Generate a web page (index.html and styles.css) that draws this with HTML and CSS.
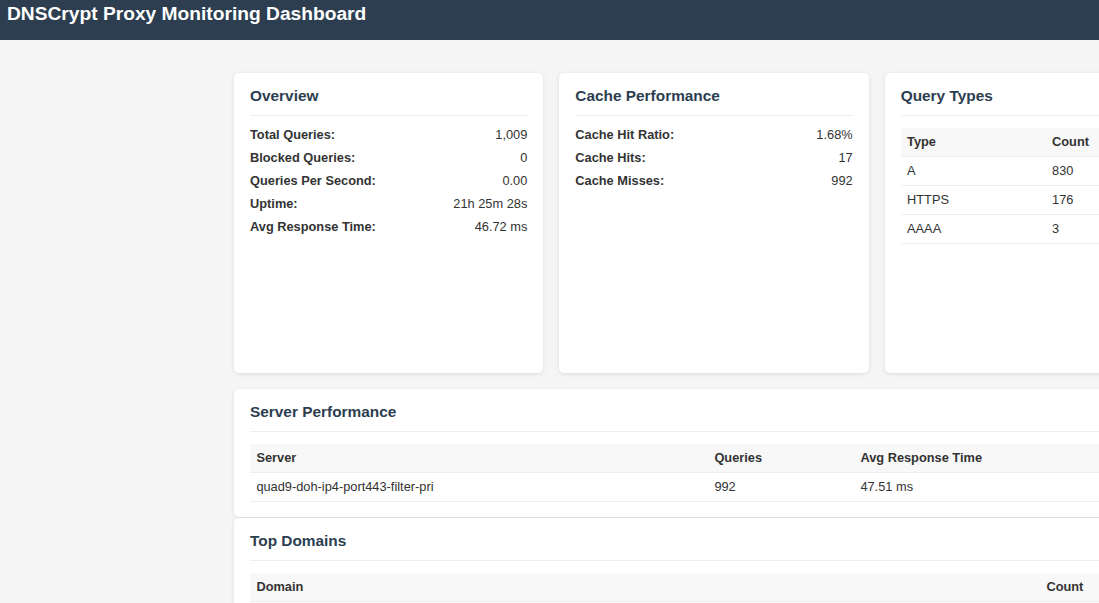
FILE: index.html
```html
<!DOCTYPE html>
<html lang="en">
<head>
<meta charset="utf-8">
<title>DNSCrypt Proxy Monitoring Dashboard</title>
<link rel="stylesheet" href="styles.css">
</head>
<body>
<header class="topbar">
  <h1 class="topbar-title">DNSCrypt Proxy Monitoring Dashboard</h1>
</header>
<main class="container">
  <section class="grid">
    <div class="card card-fixed">
      <h2 class="card-title">Overview</h2>
      <div class="stats">
        <div class="stat"><span class="stat-label">Total Queries:</span><span class="stat-value">1,009</span></div>
        <div class="stat"><span class="stat-label">Blocked Queries:</span><span class="stat-value">0</span></div>
        <div class="stat"><span class="stat-label">Queries Per Second:</span><span class="stat-value">0.00</span></div>
        <div class="stat"><span class="stat-label">Uptime:</span><span class="stat-value">21h 25m 28s</span></div>
        <div class="stat"><span class="stat-label">Avg Response Time:</span><span class="stat-value">46.72 ms</span></div>
      </div>
    </div>
    <div class="card card-fixed">
      <h2 class="card-title">Cache Performance</h2>
      <div class="stats">
        <div class="stat"><span class="stat-label">Cache Hit Ratio:</span><span class="stat-value">1.68%</span></div>
        <div class="stat"><span class="stat-label">Cache Hits:</span><span class="stat-value">17</span></div>
        <div class="stat"><span class="stat-label">Cache Misses:</span><span class="stat-value">992</span></div>
      </div>
    </div>
    <div class="card card-fixed">
      <h2 class="card-title">Query Types</h2>
      <table class="data-table">
        <thead><tr><th class="col-type">Type</th><th>Count</th></tr></thead>
        <tbody>
          <tr><td>A</td><td>830</td></tr>
          <tr><td>HTTPS</td><td>176</td></tr>
          <tr><td>AAAA</td><td>3</td></tr>
        </tbody>
      </table>
    </div>
  </section>
  <section class="card card-wide">
    <h2 class="card-title">Server Performance</h2>
    <table class="data-table">
      <thead><tr><th class="col-server">Server</th><th class="col-queries">Queries</th><th>Avg Response Time</th></tr></thead>
      <tbody>
        <tr><td>quad9-doh-ip4-port443-filter-pri</td><td>992</td><td>47.51 ms</td></tr>
      </tbody>
    </table>
  </section>
  <section class="card card-wide card-next">
    <h2 class="card-title">Top Domains</h2>
    <table class="data-table">
      <thead><tr><th class="col-domain">Domain</th><th>Count</th></tr></thead>
    </table>
  </section>
</main>
</body>
</html>
```

FILE: styles.css
```css
html {
  overflow: hidden;
}
body {
  margin: 0;
  background: #f5f5f5;
  font-family: "Liberation Sans", Arial, sans-serif;
  color: #333;
}
.topbar {
  background: #2c3e50;
  color: #fff;
  height: 40px;
  box-sizing: border-box;
  padding: 3px 7px 0;
}
.topbar-title {
  margin: 0;
  font-size: 19.2px;
  line-height: 22px;
  font-weight: bold;
}
.container {
  width: 960px;
  margin-left: 234px;
  padding-top: 33px;
}
.grid {
  display: grid;
  grid-template-columns: repeat(3, 1fr);
  gap: 16px;
}
.card {
  background: #fff;
  border-radius: 5px;
  box-shadow: 0 1px 4px rgba(0, 0, 0, 0.1);
  padding: 14px 16px 15px;
}
.card-fixed {
  height: 300px;
  box-sizing: border-box;
}
.card-wide {
  margin-top: 16px;
}
.card-next {
  margin-top: 1px;
}
.card-title {
  margin: 0 0 7px;
  font-size: 15.4px;
  line-height: 18px;
  font-weight: bold;
  color: #2c3e50;
  padding-bottom: 10px;
  border-bottom: 1px solid #eee;
}
.stat {
  display: flex;
  justify-content: space-between;
  font-size: 12.8px;
  line-height: 23px;
}
.stat-label {
  font-weight: bold;
  color: #333;
}
.stat-value {
  color: #333;
}
.data-table {
  width: 100%;
  border-collapse: collapse;
  margin-top: 12px;
  font-size: 12.8px;
}
.data-table th,
.data-table td {
  text-align: left;
  padding: 7px 6.4px;
  line-height: 14px;
  border-bottom: 1px solid #eee;
  color: #333;
}
.data-table th {
  background: #f8f8f8;
  font-weight: bold;
}
.col-type {
  width: 145px;
  box-sizing: border-box;
}
.col-server {
  width: 458px;
  box-sizing: border-box;
}
.col-queries {
  width: 146px;
  box-sizing: border-box;
}
.col-domain {
  width: 790px;
  box-sizing: border-box;
}
```
